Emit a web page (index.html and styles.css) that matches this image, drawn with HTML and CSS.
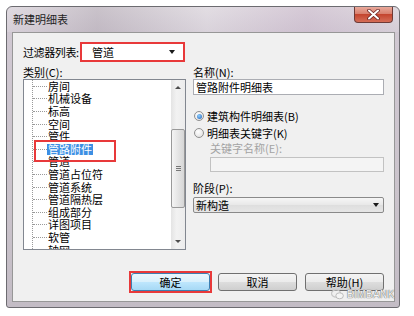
FILE: index.html
```html
<!DOCTYPE html>
<html>
  <head>
    <title>新建明细表</title>
    <meta charset="UTF-8">
    <meta name="viewport" content="width=device-width, initial-scale=1.0">
    <link rel="stylesheet" href="styles.css">
  </head>
  <body>
    <div class="window">
      <div class="titlebar">
        <span class="title">新建明细表</span>
        <span class="close">
          <svg width="13" height="11" viewBox="0 0 13 11">
            <path d="M2 1.5 L11 9.5 M11 1.5 L2 9.5" stroke="#6a2323" stroke-width="3.6" stroke-linecap="round"/>
            <path d="M2 1.5 L11 9.5 M11 1.5 L2 9.5" stroke="#ffffff" stroke-width="2" stroke-linecap="round"/>
          </svg>
        </span>
      </div>

      <div class="client">
        <div class="filter-row">
          <span class="label filter-label">过滤器列表:</span>
          <div class="filter-combo">
            <span>管道</span>
            <span class="arrow"></span>
          </div>
        </div>

        <div class="main">
          <!-- category tree -->
          <div class="left-col">
            <div class="label">类别(C):</div>
            <div class="listbox">
              <div class="tree">
                <div class="row"><span class="dash"></span><span class="txt">房间</span></div>
                <div class="row"><span class="dash"></span><span class="txt">机械设备</span></div>
                <div class="row"><span class="dash"></span><span class="txt">标高</span></div>
                <div class="row"><span class="dash"></span><span class="txt">空间</span></div>
                <div class="row"><span class="dash"></span><span class="txt">管件</span></div>
                <div class="row"><span class="dash"></span><span class="txt selected">管路附件</span></div>
                <div class="row"><span class="dash"></span><span class="txt">管道</span></div>
                <div class="row"><span class="dash"></span><span class="txt">管道占位符</span></div>
                <div class="row"><span class="dash"></span><span class="txt">管道系统</span></div>
                <div class="row"><span class="dash"></span><span class="txt">管道隔热层</span></div>
                <div class="row"><span class="dash"></span><span class="txt">组成部分</span></div>
                <div class="row"><span class="dash"></span><span class="txt">详图项目</span></div>
                <div class="row"><span class="dash"></span><span class="txt">软管</span></div>
                <div class="row"><span class="dash"></span><span class="txt">轴网</span></div>
              </div>
              <div class="scrollbar">
                <div class="sb-btn"><span class="sb-up"></span></div>
                <div class="sb-track">
                  <div class="sb-thumb"><span class="grip"></span></div>
                </div>
                <div class="sb-btn"><span class="sb-down"></span></div>
              </div>
              <div class="mark"></div>
            </div>
          </div>

          <!-- name / type / phase -->
          <div class="right-col">
            <div class="label">名称(N):</div>
            <div class="field">管路附件明细表</div>

            <div class="radio-row first">
              <span class="radio checked"></span>
              <span>建筑构件明细表(B)</span>
            </div>
            <div class="radio-row">
              <span class="radio"></span>
              <span>明细表关键字(K)</span>
            </div>
            <div class="label sub disabled">关键字名称(E):</div>
            <div class="field sub disabled-field"></div>

            <div class="label phase-label">阶段(P):</div>
            <div class="dropdown">
              <span>新构造</span>
              <span class="arrow"></span>
            </div>
          </div>
        </div>

        <div class="buttons">
          <button class="btn default">确定</button>
          <button class="btn">取消</button>
          <button class="btn">帮助(H)</button>
        </div>
      </div>

      <div class="watermark">
        <svg width="13" height="11" viewBox="0 0 13 11">
          <ellipse cx="5" cy="4.5" rx="4.5" ry="3.6" fill="none" stroke="#c8c8c8" stroke-width="1.2"/>
          <ellipse cx="8.6" cy="6.8" rx="3.8" ry="3" fill="#f4f4f4" stroke="#b0b0b0" stroke-width="0.8"/>
        </svg>
        <span>BIMBANK</span>
      </div>
    </div>
  </body>
</html>
```

FILE: styles.css
```css
body {
    margin: 0;
    width: 414px;
    height: 316px;
    background-color: white;
    font-family: "Noto Sans CJK SC", "Noto Sans", sans-serif;
    font-size: 11px;
    color: black;
    overflow: hidden;
}
.window {
    position: relative;
    margin: 6px 0 0 6px;
    width: 394px;
    height: 302px;
    box-sizing: border-box;
    border: 1px solid #6c6b70;
    border-radius: 6px 6px 3px 3px;
    background: linear-gradient(to bottom, #dbd5dc 0px, #d0c8d2 24px, #cbc4cc 60%, #c3bcc5 100%);
    display: flex;
    flex-direction: column;
}
.titlebar {
    height: 25px;
    display: flex;
    align-items: flex-start;
    padding-left: 6px;
    background: linear-gradient(to right, rgba(255,255,255,0.15) 0px, rgba(150,140,150,0.25) 90px, rgba(255,255,255,0.2) 200px, rgba(200,170,200,0.25) 300px, rgba(255,255,255,0.1) 100%);
    border-radius: 5px 5px 0 0;
}
.title {
    line-height: 25px;
    flex: 1;
    color: #1e1e1e;
}
.close {
    width: 39px;
    height: 16px;
    margin-right: 6px;
    box-sizing: border-box;
    border: 1px solid #6e3a36;
    border-top: none;
    border-radius: 0 0 4px 4px;
    background: linear-gradient(to bottom, #e9a99b 0%, #d8806e 45%, #c4452f 50%, #d56d57 100%);
    display: flex;
    align-items: center;
    justify-content: center;
}
.client {
    margin: 0 4px 5px 5px;
    height: 270px;
    box-sizing: border-box;
    border: 1px solid #979797;
    background-color: #f0f0f0;
    padding: 9px 10px 10px 10px;
    display: flex;
    flex-direction: column;
}
.label {
    height: 14px;
    line-height: 14px;
    white-space: nowrap;
}
.filter-row {
    display: flex;
    align-items: center;
    height: 20px;
}
.filter-label {
    width: 57px;
    flex-shrink: 0;
    letter-spacing: -0.4px;
}
.filter-combo {
    width: 105px;
    height: 20px;
    box-sizing: border-box;
    border: 2px solid #e8393a;
    background-color: white;
    display: flex;
    align-items: center;
    justify-content: space-between;
    padding: 0 8px 0 10px;
}
.arrow {
    width: 0;
    height: 0;
    border-left: 3.5px solid transparent;
    border-right: 3.5px solid transparent;
    border-top: 4px solid #1a1a1a;
}
.main {
    margin-top: 3px;
    display: flex;
    gap: 7px;
}
.left-col {
    width: 163px;
}
.listbox {
    position: relative;
    height: 171px;
    box-sizing: border-box;
    border: 1px solid #828790;
    background-color: white;
    display: flex;
}
.tree {
    flex: 1;
    overflow: hidden;
    margin-left: 8px;
    border-left: 1px dotted #9a9a9a;
}
.row {
    height: 12.6px;
    display: flex;
    align-items: center;
}
.dash {
    width: 14px;
    border-top: 1px dotted #9a9a9a;
}
.txt {
    padding: 0 1px;
    line-height: 11px;
}
.txt.selected {
    background-color: #3d8fe3;
    color: white;
}
.mark {
    position: absolute;
    left: 10px;
    top: 60px;
    width: 82px;
    height: 22px;
    box-sizing: border-box;
    border: 2px solid #e8393a;
}
.scrollbar {
    width: 14px;
    display: flex;
    flex-direction: column;
    background: linear-gradient(to right, #e4e4e4, #f2f2f2 40%, #ececec);
}
.sb-btn {
    height: 15px;
    display: flex;
    align-items: center;
    justify-content: center;
}
.sb-up {
    border-left: 3px solid transparent;
    border-right: 3px solid transparent;
    border-bottom: 3px solid #4d4d4d;
}
.sb-down {
    border-left: 3px solid transparent;
    border-right: 3px solid transparent;
    border-top: 3px solid #4d4d4d;
}
.sb-track {
    flex: 1;
    padding-top: 34px;
}
.sb-thumb {
    height: 79px;
    box-sizing: border-box;
    border: 1px solid #999999;
    border-radius: 2px;
    background: linear-gradient(to right, #f4f4f4, #e2e2e2 60%, #d6d6d6);
    display: flex;
    align-items: center;
    justify-content: center;
}
.grip {
    width: 5px;
    height: 5px;
    background: repeating-linear-gradient(to bottom, #777 0px, #777 1px, transparent 1px, transparent 2px);
}
.right-col {
    width: 191px;
    display: flex;
    flex-direction: column;
}
.field {
    height: 16px;
    box-sizing: border-box;
    border: 1px solid #abadb3;
    background-color: white;
    padding-left: 2px;
    line-height: 14px;
}
.radio-row {
    height: 14px;
    display: flex;
    align-items: center;
    gap: 3px;
    margin-top: 3px;
    padding-left: 1px;
}
.radio-row.first {
    margin-top: 14px;
}
.radio {
    width: 10px;
    height: 10px;
    box-sizing: border-box;
    border-radius: 50%;
    border: 1px solid #8f8f8f;
    background: radial-gradient(circle at 40% 35%, #ffffff, #dcdcdc);
    display: flex;
    align-items: center;
    justify-content: center;
}
.radio.checked::after {
    content: "";
    width: 5px;
    height: 5px;
    border-radius: 50%;
    background: radial-gradient(circle at 40% 35%, #8fd0ff, #1f5fb8);
}
.sub {
    margin-left: 17px;
}
.label.disabled {
    margin-top: 1px;
    color: #a3a3a3;
}
.disabled-field {
    margin-top: 2px;
    height: 15px;
    background-color: #f4f4f4;
    border-color: #c2c2c2;
}
.phase-label {
    margin-top: 9px;
}
.dropdown {
    margin-top: 2px;
    height: 16px;
    box-sizing: border-box;
    border: 1px solid #8a8a8a;
    border-radius: 2px;
    background: linear-gradient(to bottom, #f6f6f6, #e8e8e8 50%, #dedede 51%, #e6e6e6);
    display: flex;
    align-items: center;
    justify-content: space-between;
    padding: 0 4px 0 2px;
}
.buttons {
    margin-top: auto;
    display: flex;
    justify-content: flex-end;
    gap: 8px;
}
.btn {
    position: relative;
    width: 79px;
    height: 18px;
    padding: 0;
    margin: 0;
    font-family: "Noto Sans CJK SC", "Noto Sans", sans-serif;
    font-size: 11px;
    color: black;
    border: 1px solid #707070;
    border-radius: 3px;
    background: linear-gradient(to bottom, #f4f4f4 0%, #ebebeb 50%, #dddddd 51%, #cfcfcf 100%);
}
.btn.default {
    border-color: #3c7fb1;
    background: linear-gradient(to bottom, #eaf6fd 0%, #d9f0fc 50%, #bee6fd 51%, #a7d9f5 100%);
}
.btn.default::after {
    content: "";
    position: absolute;
    left: -3px;
    top: -3px;
    right: -3px;
    bottom: -3px;
    border: 2px solid #e8393a;
}
.watermark {
    position: absolute;
    left: 324px;
    top: 282px;
    display: flex;
    align-items: center;
    gap: 3px;
    color: #f4f4f4;
    font-family: "Liberation Sans", sans-serif;
    font-size: 10px;
    letter-spacing: 0.4px;
    text-shadow: 0 0 1px #606060, 0 0 1px #606060;
}
```
